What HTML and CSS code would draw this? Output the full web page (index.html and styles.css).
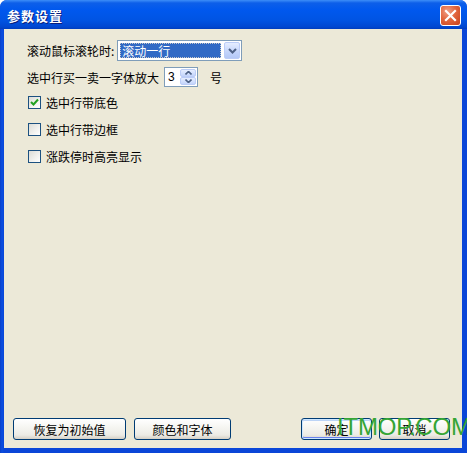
FILE: index.html
```html
<!DOCTYPE html>
<html lang="zh-CN">
<head>
    <meta charset="UTF-8">
    <title>参数设置</title>
    <link rel="stylesheet" href="styles.css">
</head>
<body>
    <div class="window">
        <div class="titlebar">
            <span class="title">参数设置</span>
            <span class="close-btn">
                <svg width="13" height="13" viewBox="0 0 13 13">
                    <path d="M2 2 L11 11 M11 2 L2 11" stroke="#fff" stroke-width="2.2" stroke-linecap="square"/>
                </svg>
            </span>
        </div>
        <div class="frame">
            <div class="client">
                <div class="options">
                    <div class="row row-combo">
                        <span class="label">滚动鼠标滚轮时:</span>
                        <div class="combo">
                            <span class="combo-value"><span class="combo-text">滚动一行</span></span>
                            <span class="combo-btn">
                                <svg width="9" height="6" viewBox="0 0 9 6">
                                    <path d="M1 1 L4.5 4.5 L8 1" fill="none" stroke="#4d6185" stroke-width="2"/>
                                </svg>
                            </span>
                        </div>
                    </div>
                    <div class="row row-spin">
                        <span class="label">选中行买一卖一字体放大</span>
                        <div class="spin">
                            <span class="spin-value">3</span>
                            <span class="spin-btns">
                                <span class="spin-up">
                                    <svg width="7" height="4" viewBox="0 0 7 4"><path d="M0.5 3.5 L3.5 0.5 L6.5 3.5" fill="none" stroke="#4d6185" stroke-width="1.6"/></svg>
                                </span>
                                <span class="spin-down">
                                    <svg width="7" height="4" viewBox="0 0 7 4"><path d="M0.5 0.5 L3.5 3.5 L6.5 0.5" fill="none" stroke="#4d6185" stroke-width="1.6"/></svg>
                                </span>
                            </span>
                        </div>
                        <span class="unit">号</span>
                    </div>
                    <label class="row check-row">
                        <span class="checkbox">
                            <svg width="9" height="9" viewBox="0 0 9 9">
                                <path d="M1 4 L3.5 6.5 L8 1.5" fill="none" stroke="#21a121" stroke-width="2"/>
                            </svg>
                        </span>
                        <span class="label">选中行带底色</span>
                    </label>
                    <label class="row check-row">
                        <span class="checkbox"></span>
                        <span class="label">选中行带边框</span>
                    </label>
                    <label class="row check-row">
                        <span class="checkbox"></span>
                        <span class="label">涨跌停时高亮显示</span>
                    </label>
                </div>
                <div class="buttons">
                    <div class="btn-group">
                        <button class="btn btn-reset">恢复为初始值</button>
                        <button class="btn btn-font">颜色和字体</button>
                    </div>
                    <div class="btn-group">
                        <button class="btn btn-ok default">确定</button>
                        <button class="btn btn-cancel">取消</button>
                    </div>
                </div>
            </div>
        </div>
        <div class="watermark">ITMOP.COM</div>
    </div>
</body>
</html>
```

FILE: styles.css
```css
body {
    margin: 0;
    background-color: #ffffff;
    font-family: "Noto Sans CJK SC", "Liberation Sans", sans-serif;
    font-size: 12px;
    color: #000;
}
.window {
    position: relative;
    width: 467px;
    height: 453px;
    display: flex;
    flex-direction: column;
    border-radius: 7px 7px 0 0;
    overflow: hidden;
    background-color: #0844d6;
}
.titlebar {
    height: 29px;
    flex: none;
    display: flex;
    align-items: center;
    justify-content: space-between;
    padding: 0 6px 0 7px;
    background: linear-gradient(#3d8ef8 0, #0d5fe9 3px, #0058ee 10px, #0054e3 20px, #0047d0 27px, #003dbd 29px);
}
.title {
    color: #fff;
    font-weight: bold;
    font-size: 13px;
    letter-spacing: 1px;
    text-shadow: 1px 1px 0 #0a1e7a;
    margin-top: 1px;
}
.close-btn {
    width: 19px;
    height: 19px;
    margin-top: 2px;
    display: flex;
    align-items: center;
    justify-content: center;
    border: 1px solid #fff;
    border-radius: 3px;
    background: radial-gradient(circle at 35% 30%, #f0a088 0, #e2673f 45%, #c7401a 100%);
}
.frame {
    flex: 1;
    display: flex;
    padding: 0 5px 5px 4px;
    background: linear-gradient(to right, #0a3fc8 0, #0a4ee0 2px, #0a46d8 4px);
}
.client {
    flex: 1;
    display: flex;
    flex-direction: column;
    justify-content: space-between;
    background-color: #ece9d8;
    padding: 11px 12px 8px 9px;
}
.options {
    display: flex;
    flex-direction: column;
    padding-left: 14px;
}
.row {
    display: flex;
    align-items: center;
}
.row-combo {
    height: 21px;
}
.row-spin {
    height: 20px;
    margin-top: 6px;
}
.check-row {
    height: 18px;
    margin-top: 9px;
    padding-left: 1px;
}
.row-spin + .check-row {
    margin-top: 6px;
}
.label {
    white-space: nowrap;
}
.combo {
    margin-left: 3px;
    width: 123px;
    height: 19px;
    border: 1px solid #7f9db9;
    background-color: #fff;
    display: flex;
}
.combo-value {
    flex: 1;
    padding: 2px;
    display: flex;
}
.combo-text {
    flex: 1;
    background-color: #316ac5;
    color: #fff;
    outline: 1px dotted #c8c8c8;
    outline-offset: -1px;
    padding-left: 2px;
    line-height: 15px;
}
.combo-btn {
    width: 16px;
    margin: 1px;
    display: flex;
    align-items: center;
    justify-content: center;
    border: 1px solid #bccdf7;
    border-radius: 2px;
    box-sizing: border-box;
    background: linear-gradient(#e6eeff, #c3d4fb 60%, #b4c8f6);
}
.spin {
    margin-left: 5px;
    width: 32px;
    height: 18px;
    border: 1px solid #7f9db9;
    background-color: #fff;
    display: flex;
}
.spin-value {
    flex: 1;
    padding-left: 3px;
    line-height: 18px;
    font-family: "Liberation Sans", sans-serif;
}
.spin-btns {
    width: 16px;
    margin: 1px 1px 1px 0;
    display: flex;
    flex-direction: column;
}
.spin-up,
.spin-down {
    flex: 1;
    display: flex;
    align-items: center;
    justify-content: center;
    border: 1px solid #bccdf7;
    border-radius: 2px;
    background: linear-gradient(#e6eeff, #c3d4fb);
}
.unit {
    margin-left: 12px;
}
.checkbox {
    width: 11px;
    height: 11px;
    margin-right: 5px;
    border: 1px solid #1c5180;
    background: linear-gradient(135deg, #dcdcd6 0, #f2f2ef 60%, #ffffff 100%);
    display: flex;
    align-items: center;
    justify-content: center;
}
.buttons {
    display: flex;
    justify-content: space-between;
}
.btn-group {
    display: flex;
    gap: 8px;
}
.btn-group + .btn-group {
    gap: 7px;
}
.btn {
    height: 22px;
    padding: 0;
    border: 1px solid #003c74;
    border-radius: 3px;
    font-family: "Noto Sans CJK SC", "Liberation Sans", sans-serif;
    font-size: 12px;
    color: #000;
    background: linear-gradient(#ffffff 0, #f6f6f2 40%, #ecebe5 80%, #d6d0c5 100%);
}
.btn-reset {
    width: 113px;
}
.btn-font {
    width: 97px;
}
.btn-ok,
.btn-cancel {
    width: 71px;
}
.btn.default {
    box-shadow: inset 0 0 0 1px #cee7ff, inset 0 -1px 0 1px #6982ee, inset 0 1px 0 1px #bcd4f6;
}
.watermark {
    position: absolute;
    left: 337px;
    top: 415px;
    font-family: "Liberation Sans", sans-serif;
    font-size: 24px;
    letter-spacing: -0.2px;
    line-height: 1;
    white-space: nowrap;
    color: #35a535;
    pointer-events: none;
}
```
